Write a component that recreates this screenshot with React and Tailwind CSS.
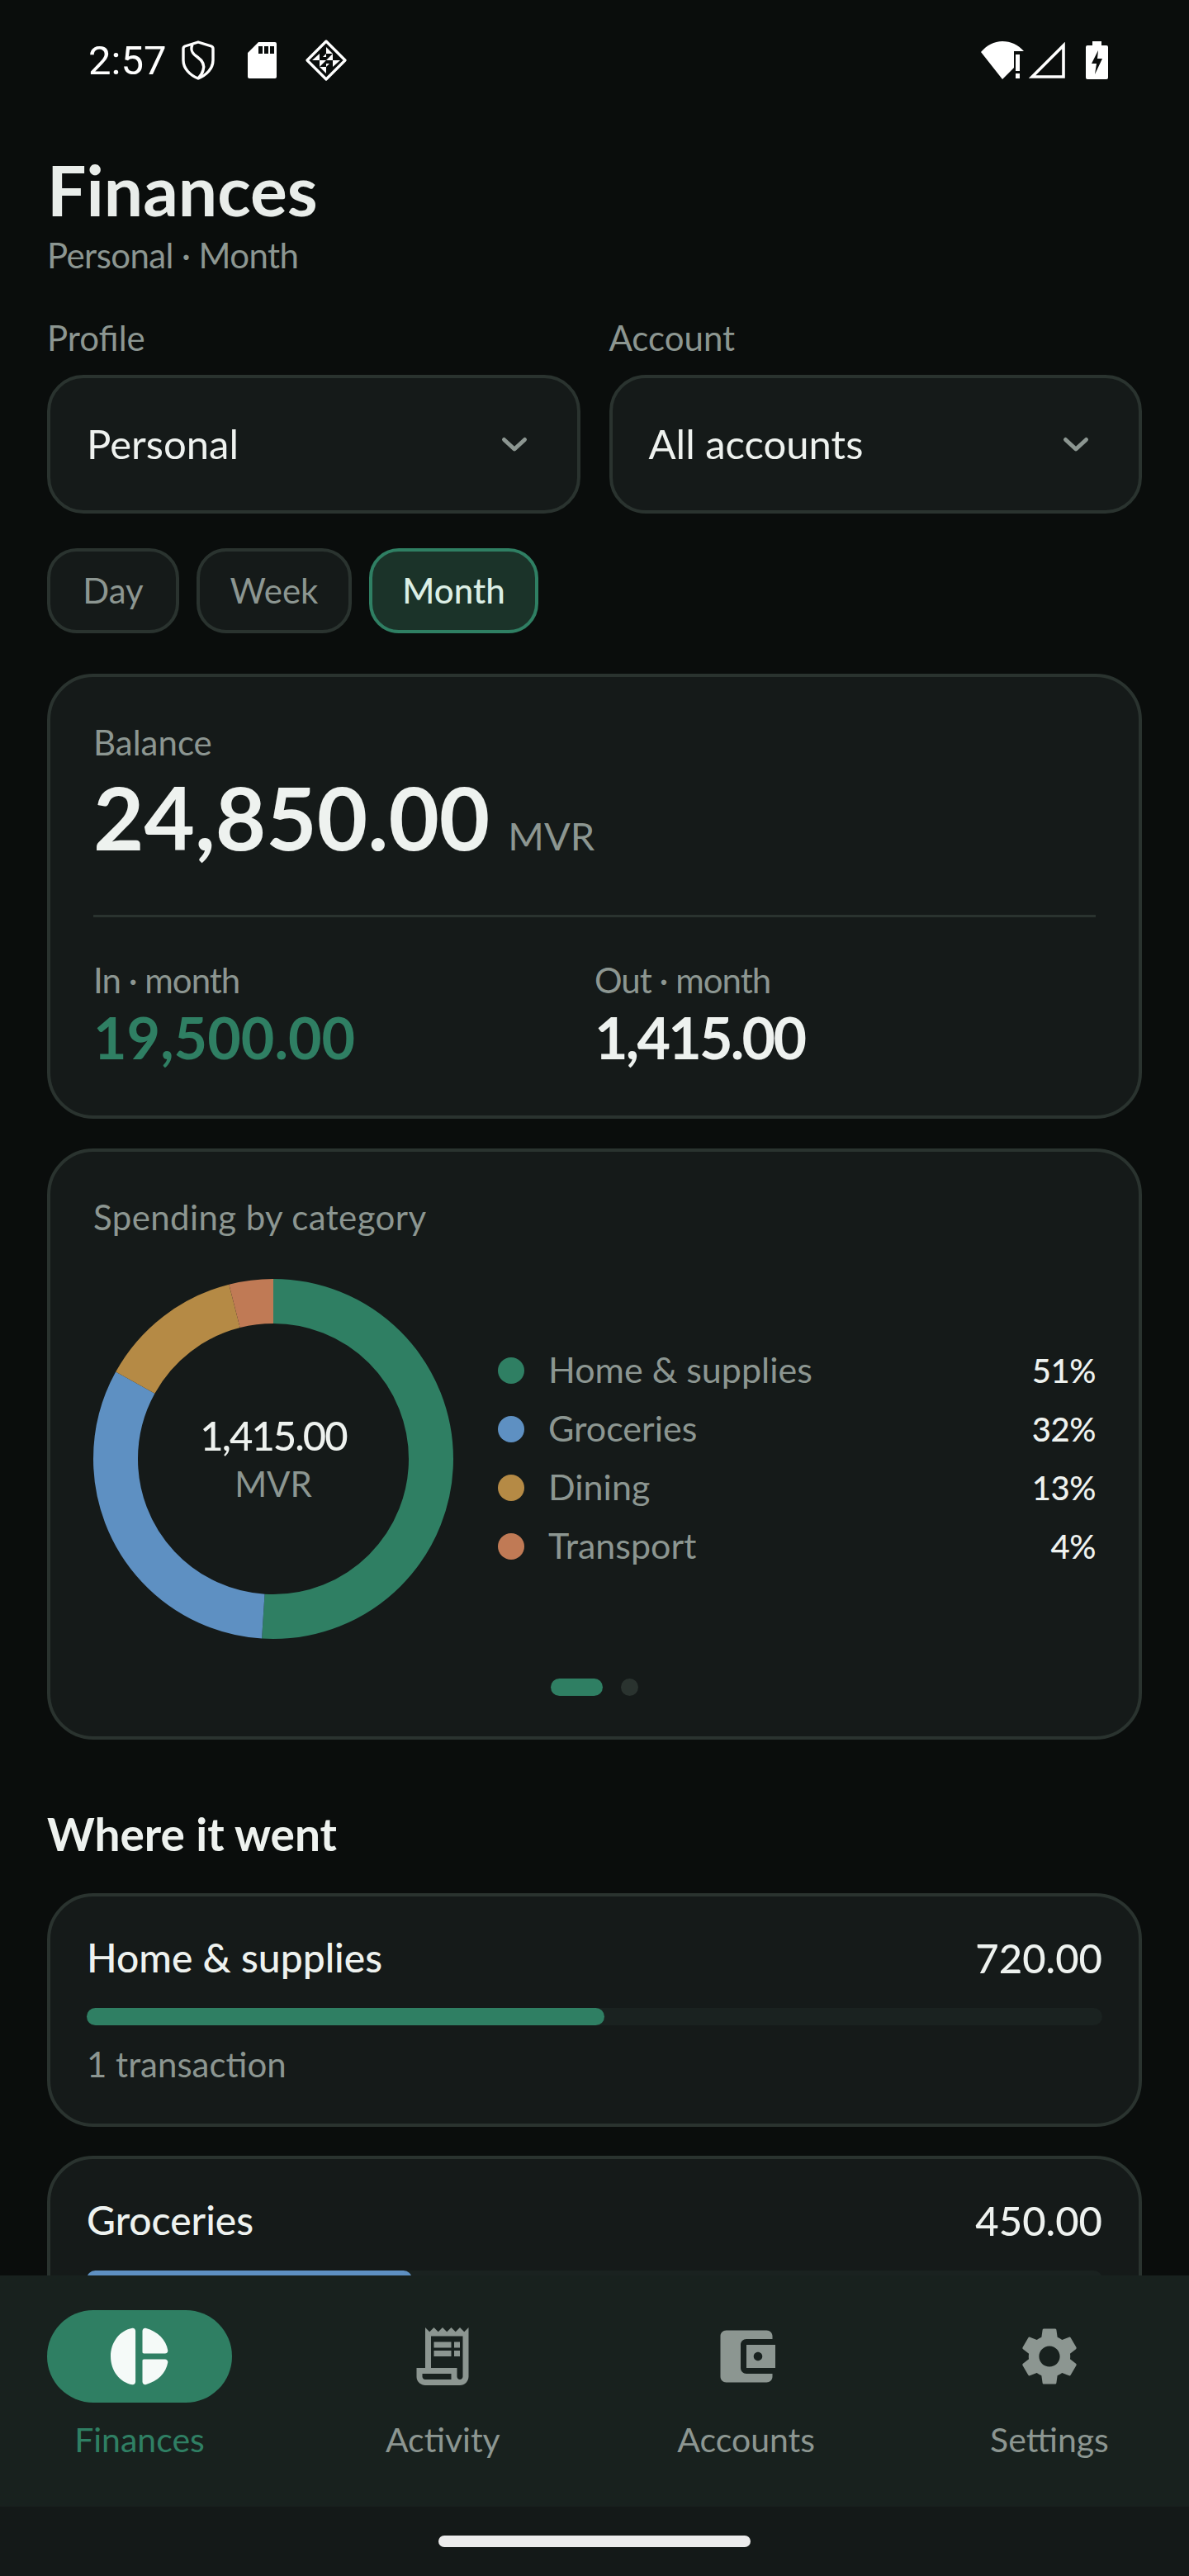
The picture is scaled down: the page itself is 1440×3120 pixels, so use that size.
const legend = [
  { name: 'Home & supplies', pct: 51, color: '#2f7f63', dot: 'bg-[#2f7f63]' },
  { name: 'Groceries', pct: 32, color: '#5e90c2', dot: 'bg-[#5e90c2]' },
  { name: 'Dining', pct: 13, color: '#b58a45', dot: 'bg-[#b58a45]' },
  { name: 'Transport', pct: 4, color: '#c07a55', dot: 'bg-[#c07a55]' },
]

const Donut = () => {
  const r = 191
  const c = 2 * Math.PI * r
  let offset = 0
  return (
    <div className="grid h-[436px] w-[436px] shrink-0 place-items-center">
      <svg viewBox="0 0 436 436" className="col-start-1 row-start-1 h-[436px] w-[436px] -rotate-90">
        {legend.map((s) => {
          const len = (s.pct / 100) * c
          const el = (
            <circle key={s.name} cx="218" cy="218" r={r} fill="none" stroke={s.color} strokeWidth="54" strokeDasharray={`${len} ${c - len}`} strokeDashoffset={-offset} />
          )
          offset += len
          return el
        })}
      </svg>
      <div className="col-start-1 row-start-1 flex flex-col items-center pb-[4px]">
        <span className="mb-[4px] text-[49px] leading-[60px] font-medium tracking-[-2px] text-[#eef2ef]">1,415.00</span>
        <span className="text-[42px] leading-[50px] text-[#8c9691]">MVR</span>
      </div>
    </div>
  )
}

const Chevron = () => (
  <svg viewBox="0 0 36 24" className="h-[24px] w-[36px]" fill="none" stroke="#8c9691" strokeWidth="5" strokeLinecap="round" strokeLinejoin="round">
    <path d="M5.5 6.5 18 18 30.5 6.5" />
  </svg>
)

const Select = ({ label, value }) => (
  <div className="flex-1">
    <p className="text-[42px] leading-[50px] text-[#8c9691]">{label}</p>
    <div className="mt-[20px] flex h-[168px] items-center justify-between rounded-[44px] border-4 border-[#2a332f] bg-[#151a19] pr-[58px] pl-[44px]">
      <span className="text-[49px] text-[#eef2ef]">{value}</span>
      <Chevron />
    </div>
  </div>
)

const Chip = ({ label, w, active }) => (
  <div className={`flex h-[103px] items-center justify-center rounded-[36px] border-4 text-[42px] ${w} ${active ? 'border-[#2f7f63] bg-[#1b3329] font-medium text-[#dcefe6]' : 'border-[#2a332f] bg-[#151a19] text-[#8c9691]'}`}>
    {label}
  </div>
)

const CategoryCard = ({ name, amount, bar, barWidth, note }) => (
  <div className="rounded-[56px] border-4 border-[#2a332f] bg-[#151a19] px-[44px] pt-[44px] pb-[47px]">
    <div className="flex items-center justify-between text-[#eef2ef]">
      <span className="text-[48px] leading-[60px] font-medium">{name}</span>
      <span className="text-[49px] leading-[60px] font-medium">{amount}</span>
    </div>
    <div className="mt-[31px] h-[21px] rounded-full bg-[#1a2220]">
      <div className={`h-full rounded-full ${bar} ${barWidth}`} />
    </div>
    {note && <p className="mt-[22px] text-[42px] leading-[50px] text-[#8c9691]">{note}</p>}
  </div>
)

const NavItem = ({ label, active, children }) => (
  <div className="flex w-[224px] flex-col items-center">
    <div className={`flex h-[112px] w-[224px] items-center justify-center rounded-[56px] ${active ? 'bg-[#2f7f63]' : ''}`}>
      <svg viewBox="0 0 24 24" className="h-[84px] w-[84px]" fill={active ? '#f5faf8' : '#8c9691'}>
        {children}
      </svg>
    </div>
    <span className={`mt-[20px] text-[41px] leading-[50px] ${active ? 'text-[#2f7f63]' : 'text-[#8c9691]'}`}>{label}</span>
  </div>
)

const StatusBar = () => (
  <div className="flex h-[146px] shrink-0 items-center justify-between pr-[98px] pl-[107px] text-white">
    <div className="flex items-center">
      <span className="w-[113px] text-[49px] font-['Roboto',sans-serif] leading-none">2:57</span>
      <svg viewBox="0 0 40 48" className="h-[48px] w-[40px]" fill="none" stroke="white" strokeWidth="3.4" strokeLinejoin="round">
        <path d="M20 2 36 7q2 .8 2 3v14c0 10-8 18-18 22C10 42 2 34 2 24V10q0-2.200 2-3z" />
        <path d="M13 5c-3 7 0 11 6 15 7 5 9 10 7 16-1 4-3 7-6 10" />
      </svg>
      <svg viewBox="0 0 35 44" className="ml-[40px] h-[44px] w-[35px]" fill="white">
        <path fillRule="evenodd" d="M13 0h20a2 2 0 0 1 2 2v40a2 2 0 0 1-2 2H2a2 2 0 0 1-2-2V13zM13 5v9h5V5zm7 0v9h5V5zm7 0v9h5V5z" />
      </svg>
      <svg viewBox="-25 -25 50 50" className="ml-[35px] h-[50px] w-[50px]">
        <path d="M0-23 23 0 0 23-23 0z" fill="none" stroke="white" strokeWidth="3.2" strokeLinejoin="round" />
        <path d="M0-16 8-8H0zM-17 0-8-8V0zM17 0H8V8zM0 16-8 8H0zM-8 0H0L-8 8zM8 0H0L8-8zM0-8-4-4H0zM0 8 4 4H0z" fill="white" />
      </svg>
    </div>
    <div className="flex items-center">
      <svg viewBox="0 0 52 46" className="h-[46px] w-[52px]" fill="white">
        <path d="M0 13C7 5 16 0 26 0s19 4 26 12H40v20l-14 14z" />
        <path d="M42 16h5v20h-5zM42 39h5v6h-5z" />
      </svg>
      <svg viewBox="0 0 44 44" className="ml-[6px] h-[44px] w-[44px]" fill="none" stroke="white" strokeWidth="3.6">
        <path d="M42 4v38H4z" />
      </svg>
      <svg viewBox="0 0 27 46" className="ml-[25px] h-[46px] w-[27px]" fill="white">
        <path fillRule="evenodd" d="M8 0h11v5h6a2 2 0 0 1 2 2v37a2 2 0 0 1-2 2H2a2 2 0 0 1-2-2V7a2 2 0 0 1 2-2h6zM15 11 7 27h6l-2 13 9-19h-6z" />
      </svg>
    </div>
  </div>
)

export default function App() {
  return (
    <div className="flex h-[3120px] w-[1440px] flex-col overflow-hidden bg-[#0a0d0c] font-['Lato',sans-serif]">
      <StatusBar />
      <main className="min-h-0 flex-1 overflow-hidden px-[57px] pt-[34px]">
        <h1 className="text-[84px] leading-[100px] font-bold text-[#e9edea]">Finances</h1>
        <p className="mt-[4px] text-[42px] leading-[50px] tracking-[-0.6px] text-[#8c9691]">Personal · Month</p>

        <div className="mt-[50px] flex gap-[35px]">
          <Select label="Profile" value="Personal" />
          <Select label="Account" value="All accounts" />
        </div>

        <div className="mt-[42px] flex gap-[21px]">
          <Chip label="Day" w="w-[160px]" />
          <Chip label="Week" w="w-[188px]" />
          <Chip label="Month" w="w-[205px]" active />
        </div>

        <section className="mt-[49px] h-[539px] rounded-[56px] border-4 border-[#2a332f] bg-[#151a19] px-[52px] pt-[54px]">
          <p className="text-[42px] leading-[50px] text-[#8c9691]">Balance</p>
          <div className="mt-[10px] flex items-baseline gap-[22px]">
            <span className="text-[106px] leading-[110px] font-bold text-[#eef2ef]">24,850.00</span>
            <span className="text-[47px] text-[#8c9691]">MVR</span>
          </div>
          <div className="mt-[60px] h-[3px] bg-[#2a332f]" />
          <div className="mt-[51px] grid grid-cols-2">
            <div>
              <p className="text-[42px] leading-[50px] tracking-[-1px] text-[#8c9691]">In · month</p>
              <p className="mt-[2px] text-[70px] leading-[84px] font-bold text-[#2f7f63]">19,500.00</p>
            </div>
            <div>
              <p className="text-[42px] leading-[50px] tracking-[-1px] text-[#8c9691]">Out · month</p>
              <p className="mt-[2px] text-[70px] leading-[84px] font-bold tracking-[-2.8px] text-[#eef2ef]">1,415.00</p>
            </div>
          </div>
        </section>

        <section className="mt-[36px] h-[716px] rounded-[56px] border-4 border-[#2a332f] bg-[#151a19] px-[52px] pt-[54px]">
          <p className="text-[42px] leading-[50px] tracking-[0.4px] text-[#8c9691]">Spending by category</p>
          <div className="mt-[50px] flex items-center gap-[54px]">
            <Donut />
            <div className="mb-[2px] flex-1">
              {legend.map((s) => (
                <div key={s.name} className="flex h-[71px] items-center">
                  <span className={`h-[32px] w-[32px] rounded-full ${s.dot}`} />
                  <span className="ml-[29px] flex-1 text-[43px] text-[#8c9691]">{s.name}</span>
                  <span className="text-[40px] font-medium tracking-[-0.5px] text-[#eef2ef]">{s.pct}%</span>
                </div>
              ))}
            </div>
          </div>
          <div className="mt-[48px] flex items-center justify-center gap-[22px]">
            <span className="h-[21px] w-[63px] rounded-full bg-[#2f7f63]" />
            <span className="h-[21px] w-[21px] rounded-full bg-[#2a332f]" />
          </div>
        </section>

        <h2 className="mt-[82px] text-[55px] leading-[64px] font-bold text-[#eef2ef]">Where it went</h2>

        <div className="mt-[40px] flex flex-col gap-[35px]">
          <CategoryCard name="Home & supplies" amount="720.00" bar="bg-[#2f7f63]" barWidth="w-[51%]" note="1 transaction" />
          <CategoryCard name="Groceries" amount="450.00" bar="bg-[#5e90c2]" barWidth="w-[32%]" />
        </div>
      </main>

      <nav className="flex h-[280px] shrink-0 justify-between bg-[#18211e] px-[57px] pt-[42px]">
        <NavItem label="Finances" active>
          <path d="M10.6 3.2v17.6c0 .6-.5 1.1-1.1 1C5.1 21 2 16.900 2 12s3.100-9 7.500-9.800c.6-.1 1.100.4 1.100 1zM13 3.200v7.300c0 .3.2.5.5.5h7.300c.6 0 1.100-.5 1-1.100-.6-3.600-3.400-6.500-7.700-7.700-.6-.1-1.100.4-1.100 1zM13 13.500v7.300c0 .6.5 1.100 1.100 1 4.300-1.200 7.100-4.100 7.700-7.700.1-.6-.4-1.100-1-1.100h-7.300c-.3 0-.5.2-.5.5z" />
        </NavItem>
        <NavItem label="Activity">
          <path d="M19.5 3.5 18 2l-1.5 1.5L15 2l-1.5 1.5L12 2l-1.5 1.5L9 2 7.5 3.5 6 2v14H3v3c0 1.66 1.34 3 3 3h12c1.66 0 3-1.34 3-3V2l-1.5 1.5zM15 20H6c-.55 0-1-.45-1-1v-1h10v2zm4-1c0 .55-.45 1-1 1s-1-.45-1-1v-3H8V5h11v14z" />
          <path d="M9 7h6v2H9zm7 0h2v2h-2zm-7 3h6v2H9zm7 0h2v2h-2z" />
        </NavItem>
        <NavItem label="Accounts">
          <path d="M21 18v1c0 1.1-.9 2-2 2H5c-1.11 0-2-.9-2-2V5c0-1.1.89-2 2-2h14c1.1 0 2 .9 2 2v1h-9c-1.11 0-2 .9-2 2v8c0 1.1.89 2 2 2h9zm-9-2h10V8H12v8zm4-2.5c-.83 0-1.5-.67-1.5-1.5s.67-1.5 1.5-1.5 1.5.67 1.5 1.5-.67 1.5-1.5 1.5z" />
        </NavItem>
        <NavItem label="Settings">
          <path d="M19.14 12.94c.04-.3.06-.61.06-.94 0-.32-.02-.64-.07-.94l2.03-1.58c.18-.14.23-.41.12-.61l-1.92-3.32c-.12-.22-.37-.29-.59-.22l-2.39.96c-.5-.38-1.03-.7-1.62-.94l-.36-2.54c-.04-.24-.24-.41-.48-.41h-3.84c-.24 0-.43.17-.47.41l-.36 2.54c-.59.24-1.13.57-1.62.94l-2.39-.96c-.22-.08-.47 0-.59.22L2.74 8.87c-.12.21-.08.47.12.61l2.03 1.58c-.05.3-.09.63-.09.94s.02.64.07.94l-2.03 1.58c-.18.14-.23.41-.12.61l1.92 3.32c.12.22.37.29.59.22l2.39-.96c.5.38 1.03.7 1.62.94l.36 2.54c.05.24.24.41.48.41h3.84c.24 0 .44-.17.47-.41l.36-2.54c.59-.24 1.13-.56 1.62-.94l2.39.96c.22.08.47 0 .59-.22l1.92-3.32c.12-.22.07-.47-.12-.61l-2.01-1.58zM12 15.6c-1.98 0-3.6-1.62-3.6-3.6s1.62-3.6 3.6-3.6 3.6 1.62 3.6 3.6-1.62 3.6-3.6 3.6z" />
        </NavItem>
      </nav>

      <div className="flex h-[84px] shrink-0 items-center justify-center bg-[#141918]">
        <div className="h-[14px] w-[378px] rounded-full bg-[#ececec]" />
      </div>
    </div>
  )
}
